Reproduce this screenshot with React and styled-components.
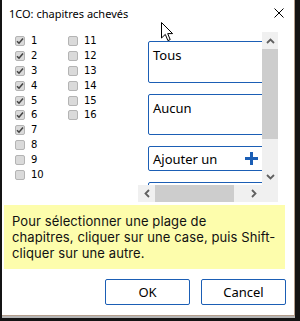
import styled, { createGlobalStyle } from 'styled-components';

const GlobalStyle = createGlobalStyle`
  html, body {
    margin: 0;
    padding: 0;
    background: #141414;
  }
  body {
    width: 300px;
    height: 321px;
    overflow: hidden;
  }
  #root {
    padding-left: 2px;
  }
`;

const BLUE = '#1b5eb5';

const Window = styled.div`
  position: relative;
  width: 292px;
  height: 315px;
  background: #fff;
  border-right: 1px solid #b39d8b;
  border-bottom: 1px solid #b39d8b;
  box-shadow: 0 2px 0 #b5b5b5;
  display: flex;
  flex-direction: column;
  font-family: 'Noto Sans', 'Open Sans', sans-serif;
  color: #000;
`;

const TitleBar = styled.div`
  height: 32px;
  display: flex;
  align-items: flex-start;
  justify-content: space-between;
  padding: 0 10px 0 7px;
  flex-shrink: 0;
`;

const Title = styled.div`
  margin-top: 6px;
  font-size: 11px;
  line-height: 15px;
`;

const Close = styled.svg`
  margin-top: 8px;
`;

const Body = styled.div`
  height: 170px;
  display: flex;
  padding-left: 13px;
  flex-shrink: 0;
`;

const CheckGrid = styled.div`
  width: 123px;
  padding-top: 2px;
  display: grid;
  grid-template-columns: 53px 1fr;
  grid-template-rows: repeat(10, 14.8px);
  grid-auto-flow: column;
  align-content: start;
`;

const CheckItem = styled.label`
  display: flex;
  align-items: center;
  gap: 6px;
  font-family: 'DejaVu Sans', Verdana, sans-serif;
  font-size: 10px;
  line-height: 12px;
`;

const Box = styled.span`
  width: 10px;
  height: 10px;
  box-sizing: border-box;
  border: 1px solid #b4b4b4;
  border-radius: 2px;
  background: #dadada;
  display: flex;
  align-items: center;
  justify-content: center;
`;

const ScrollBox = styled.div`
  width: 140px;
  height: 170px;
  display: grid;
  grid-template-columns: 124px 16px;
  grid-template-rows: 153px 17px;
`;

const Viewport = styled.div`
  overflow: hidden;
  padding: 9px 0 0 10px;
  display: flex;
  flex-direction: column;
  gap: 11px;
`;

const ListButton = styled.div`
  flex-shrink: 0;
  width: 120px;
  height: ${(p) => p.$h}px;
  box-sizing: border-box;
  border: 1px solid ${BLUE};
  border-radius: 2px;
  background: #fff;
  display: flex;
  align-items: ${(p) => (p.$center ? 'center' : 'flex-start')};
  justify-content: space-between;
  padding: ${(p) => (p.$center ? '0 8px 0 4px' : '4px 8px 0 4px')};
  font-size: 13px;
  line-height: 18px;
`;

const VScroll = styled.div`
  background: #f0f0f0;
  display: flex;
  flex-direction: column;
`;

const HScroll = styled.div`
  background: #f0f0f0;
  display: flex;
`;

const Corner = styled.div`
  background: #f0f0f0;
`;

const ArrowCell = styled.div`
  flex-shrink: 0;
  width: ${(p) => (p.$horizontal ? '17px' : 'auto')};
  height: ${(p) => (p.$horizontal ? 'auto' : '17px')};
  display: flex;
  align-items: center;
  justify-content: center;
`;

const Thumb = styled.div`
  flex-shrink: 0;
  background: #cdcdcd;
  width: ${(p) => (p.$horizontal ? '79px' : 'auto')};
  height: ${(p) => (p.$horizontal ? 'auto' : '90px')};
`;

const Track = styled.div`
  flex: 1;
`;

const Note = styled.div`
  margin: 3px 9px 0 2px;
  height: 64px;
  box-sizing: border-box;
  background: #fdfdac;
  padding: 8px 8px 0 8px;
  font-family: Inter, 'Noto Sans', sans-serif;
  font-size: 13px;
  letter-spacing: 0.1px;
  line-height: 16px;
  color: #111;
`;

const Footer = styled.div`
  display: flex;
  justify-content: flex-end;
  gap: 11px;
  padding: 10px 8px 0 0;
`;

const DialogButton = styled.button`
  width: 85px;
  height: 26px;
  box-sizing: border-box;
  border: 1px solid ${BLUE};
  border-radius: 2px;
  background: #fff;
  font-family: 'Noto Sans', 'Open Sans', sans-serif;
  font-size: 13px;
  color: #000;
  padding: 0;
`;

const Cursor = styled.svg`
  position: absolute;
  left: 159px;
  top: 22px;
`;

const Chevron = ({ dir }) => {
  const paths = {
    up: 'M1 5 L4.5 1.5 L8 5',
    down: 'M1 1 L4.5 4.5 L8 1',
    left: 'M5 1 L1.5 4.5 L5 8',
    right: 'M1 1 L4.5 4.5 L1 8',
  };
  const vertical = dir === 'up' || dir === 'down';
  return (
    <svg width={vertical ? 9 : 6} height={vertical ? 6 : 9}>
      <path d={paths[dir]} fill="none" stroke="#606060" strokeWidth="1.8" />
    </svg>
  );
};

const checked = [1, 2, 3, 4, 5, 6, 7];
const chapters = Array.from({ length: 16 }, (_, i) => i + 1);

export default function App() {
  return (
    <>
      <GlobalStyle />
      <Window>
        <TitleBar>
          <Title>1CO: chapitres achevés</Title>
          <Close width="10" height="10" viewBox="0 0 10 10">
            <path d="M0.5 0.5 L9.5 9.5 M9.5 0.5 L0.5 9.5" stroke="#000" strokeWidth="1" />
          </Close>
        </TitleBar>

        <Body>
          <CheckGrid>
            {chapters.map((n) => (
              <CheckItem key={n}>
                <Box>
                  {checked.includes(n) && (
                    <svg width="8" height="8" viewBox="0 0 8 8">
                      <path d="M1 4.2 L3 6.2 L7 1.6" fill="none" stroke="#444" strokeWidth="1.6" />
                    </svg>
                  )}
                </Box>
                {n}
              </CheckItem>
            ))}
          </CheckGrid>

          <ScrollBox>
            <Viewport>
              <ListButton $h={42}>Tous</ListButton>
              <ListButton $h={41}>Aucun</ListButton>
              <ListButton $h={25} $center>
                Ajouter un
                <svg width="15" height="15" viewBox="0 0 15 15">
                  <path d="M7.5 1 V14 M1 7.5 H14" stroke={BLUE} strokeWidth="3" />
                </svg>
              </ListButton>
              <ListButton $h={42} />
            </Viewport>
            <VScroll>
              <ArrowCell>
                <Chevron dir="up" />
              </ArrowCell>
              <Thumb />
              <Track />
              <ArrowCell>
                <Chevron dir="down" />
              </ArrowCell>
            </VScroll>
            <HScroll>
              <ArrowCell $horizontal>
                <Chevron dir="left" />
              </ArrowCell>
              <Thumb $horizontal />
              <Track />
              <ArrowCell $horizontal>
                <Chevron dir="right" />
              </ArrowCell>
            </HScroll>
            <Corner />
          </ScrollBox>
        </Body>

        <Note>
          Pour sélectionner une plage de
          <br />
          chapitres, cliquer sur une case, puis Shift-
          <br />
          cliquer sur une autre.
        </Note>

        <Footer>
          <DialogButton>OK</DialogButton>
          <DialogButton>Cancel</DialogButton>
        </Footer>

        <Cursor width="13" height="20" viewBox="0 0 13 20">
          <path
            d="M0.5 0.5 L0.5 16 L4.3 12.4 L6.9 18.6 L9.2 17.6 L6.7 11.6 L11.6 11.6 Z"
            fill="#fff"
            stroke="#000"
            strokeWidth="1"
            strokeLinejoin="round"
          />
        </Cursor>
      </Window>
    </>
  );
}
